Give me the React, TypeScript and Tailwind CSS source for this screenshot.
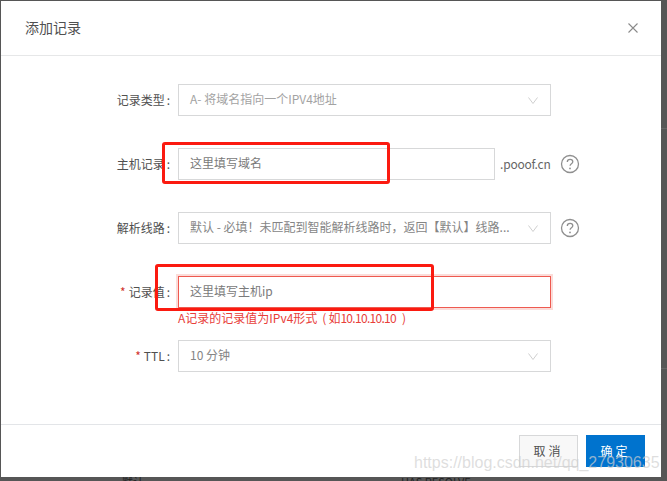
const font = "font-['Noto_Sans_CJK_SC','Liberation_Sans',sans-serif]";

function Chevron() {
  return (
    <svg width="10" height="7" viewBox="0 0 10 7" fill="none" className="shrink-0">
      <path d="M0.5 0.5l4.5 6 4.5-6" stroke="#cfcfcf" strokeWidth="1" />
    </svg>
  );
}

function Help() {
  return (
    <svg width="20" height="20" viewBox="0 0 20 20" fill="none" className="shrink-0">
      <circle cx="10" cy="10" r="8.5" stroke="#8f8f8f" strokeWidth="1.3" />
      <path d="M7.3 8c0-1.6 1.2-2.6 2.8-2.6s2.7 1 2.7 2.3c0 2-2.7 2-2.7 4" stroke="#8f8f8f" strokeWidth="1.3" />
      <circle cx="10" cy="14.4" r="0.9" fill="#8f8f8f" />
    </svg>
  );
}

function Row({ label, star, children, className }: { label: string; star?: boolean; children: React.ReactNode; className?: string }) {
  return (
    <div className={`flex items-center ${className ?? ""}`}>
      <div className="w-[177px] pr-[8px] shrink-0 flex justify-end items-center text-[12px] text-[#505050]">
        {star && <span className="text-[#d0342c] mr-[3px]">*</span>}
        <span>{label}</span>
        <span className="ml-[2px]">:</span>
      </div>
      {children}
    </div>
  );
}

function Select({ text, muted }: { text: string; muted?: boolean }) {
  return (
    <div className={`w-[373px] h-[32px] border border-[#d7d8d9] flex items-center justify-between pl-[11px] pr-[12px] text-[12px] ${muted ? "text-[#a3a3a3]" : "text-[#858585]"}`}>
      <span className="whitespace-nowrap pb-[2px]">{text}</span>
      <Chevron />
    </div>
  );
}

export default function App() {
  return (
    <div className={`relative w-[667px] h-[481px] overflow-hidden bg-[#565656] ${font}`}>
      <div className="absolute left-[661px] top-[128px] w-[6px] h-px bg-[#666]" />
      <div className="absolute left-[661px] top-[368px] w-[6px] h-px bg-[#666]" />
      <div className="absolute left-[122px] top-[475px] text-[11px] leading-[12px] text-[#222]">默认</div>
      <div className="absolute left-[401px] top-[475px] text-[11px] leading-[12px] text-[#222]">HAS RESOLVE</div>

      <div className="absolute left-[1px] top-[1px] w-[660px] h-[476px] bg-white flex flex-col">
        <div className="h-[55px] shrink-0 border-b border-[#e6e7e8] flex items-center justify-between pl-[24px] pr-[23px]">
          <span className="text-[14px] text-[#505050] pb-[2px]">添加记录</span>
          <svg width="10" height="10" viewBox="0 0 10 10" fill="none">
            <path d="M0.5 0.5l9 9M9.5 0.5l-9 9" stroke="#8a8a8a" strokeWidth="1.1" />
          </svg>
        </div>

        <div className="flex-1 flex flex-col pt-[28px]">
          <Row label="记录类型">
            <Select text="A- 将域名指向一个IPV4地址" muted />
          </Row>
          <Row label="主机记录" className="mt-[32px]">
            <div className="w-[317px] h-[32px] border border-[#d7d8d9] flex items-center pl-[11px] pb-[2px] text-[12px] text-[#7a7a7a]">这里填写域名</div>
            <span className="ml-[5px] text-[12px] tracking-[-0.2px] text-[#666]">.pooof.cn</span>
            <span className="ml-[9px] flex"><Help /></span>
          </Row>
          <Row label="解析线路" className="mt-[32px]">
            <Select text="默认 - 必填！未匹配到智能解析线路时，返回【默认】线路..." />
            <span className="ml-[9px] flex"><Help /></span>
          </Row>
          <Row label="记录值" star className="mt-[32px]">
            <div className="w-[373px] h-[32px] border border-[#ee5a50] shadow-[0_0_0_2px_#fbdcd9] flex items-center pl-[11px] pb-[2px] text-[12px] text-[#7a7a7a]">这里填写主机ip</div>
          </Row>
          <div className="pl-[177px] h-[32px] flex items-start text-[12px] leading-[18px] pt-[1px] text-[#e8403a] whitespace-nowrap">
            <span>A记录的记录值为IPv4形式</span>
            <span className="ml-[5px]">(</span>
            <span className="ml-[2px]">如</span>
            <span className="tracking-[-0.7px]">10.10.10.10</span>
            <span className="ml-[6px]">)</span>
          </div>
          <Row label="TTL" star>
            <Select text="10 分钟" />
          </Row>
        </div>

        <div className="h-[53px] shrink-0 border-t border-[#e3e5e8] flex justify-end gap-[8px] pt-[10px] pr-[16px]">
          <div className="w-[59px] h-[32px] border border-[#d7d8d9] bg-[#f8f8f8] flex items-center justify-center text-[12px] tracking-[3px] text-[#505050]">取消</div>
          <div className="w-[59px] h-[32px] bg-[#0073ce] flex items-center justify-center text-[12px] tracking-[3px] text-white">确定</div>
        </div>
      </div>

      <div className="absolute left-[162px] top-[142px] w-[228px] h-[42px] border-[3px] border-[#fb1a10] rounded-[3px]" />
      <div className="absolute left-[155px] top-[264px] w-[279px] h-[47px] border-[3px] border-[#fb1a10] rounded-[3px]" />
      <div className="absolute left-[414px] top-[451px] text-[16px] leading-[24px] text-[#d0d0d0]/70 font-['Liberation_Sans',sans-serif] whitespace-nowrap">https://blog.csdn.net/qq_27930635</div>
    </div>
  );
}
